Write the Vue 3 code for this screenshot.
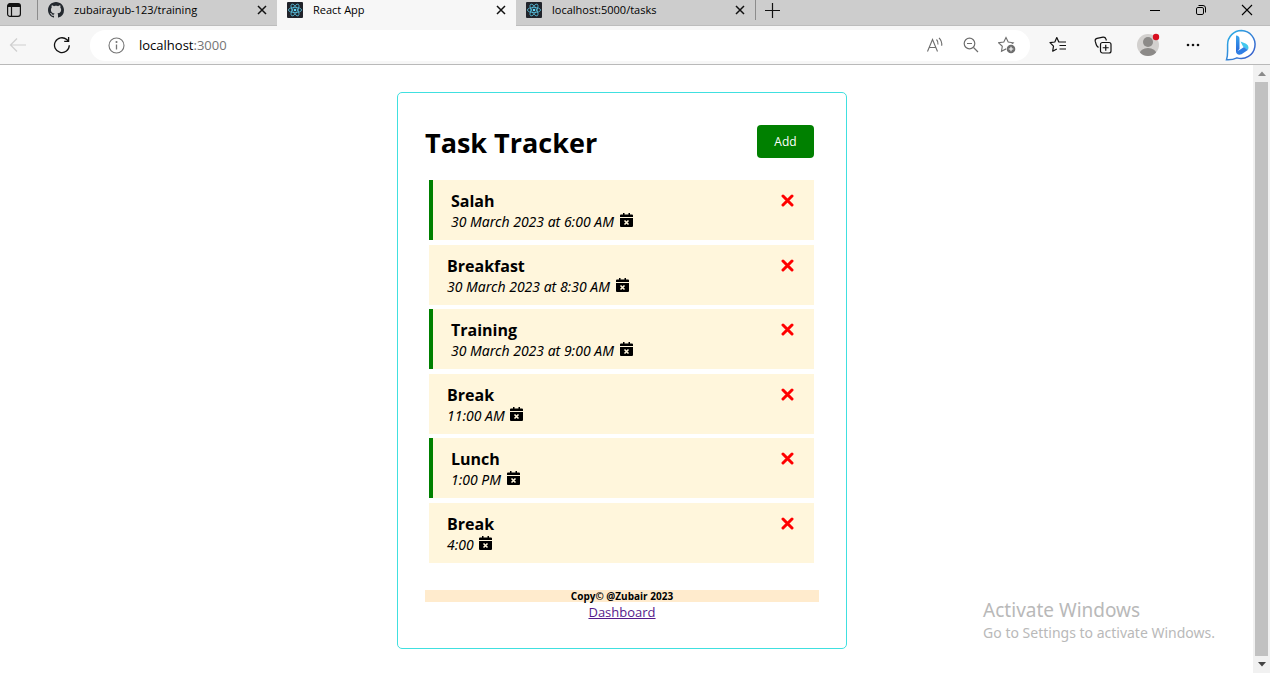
<script setup>
import { ref } from 'vue'

const tabs = [
  { title: 'zubairayub-123/training', icon: 'github', active: false },
  { title: 'React App', icon: 'react', active: true },
  { title: 'localhost:5000/tasks', icon: 'react', active: false },
]

const tasks = ref([
  { id: 1, text: 'Salah', day: '30 March 2023 at 6:00 AM', reminder: true },
  { id: 2, text: 'Breakfast', day: '30 March 2023 at 8:30 AM', reminder: false },
  { id: 3, text: 'Training', day: '30 March 2023 at 9:00 AM', reminder: true },
  { id: 4, text: 'Break', day: '11:00 AM', reminder: false },
  { id: 5, text: 'Lunch', day: '1:00 PM', reminder: true },
  { id: 6, text: 'Break', day: '4:00', reminder: false },
])

function removeTask(id) {
  tasks.value = tasks.value.filter((t) => t.id !== id)
}
</script>

<template>
  <div class="browser">
    <header class="tabbar">
      <button class="tab-actions" aria-label="Tab actions">
        <svg width="16" height="16" viewBox="0 0 16 16">
          <rect x="1.6" y="1.6" width="12.8" height="12.8" rx="2.4" fill="none" stroke="#111" stroke-width="1.2" />
          <path d="M1.6 5V4a2.4 2.4 0 0 1 2.4-2.4h8A2.4 2.4 0 0 1 14.4 4v1z" fill="#111" />
          <path d="M5.5 5v9" stroke="#111" stroke-width="1.2" />
        </svg>
      </button>
      <div v-for="tab in tabs" :key="tab.title" class="tab" :class="{ active: tab.active }">
        <svg v-if="tab.icon === 'github'" width="16" height="16" viewBox="0 0 16 16">
          <path fill="#24292f" d="M8 0C3.58 0 0 3.58 0 8c0 3.54 2.29 6.53 5.47 7.59.4.07.55-.17.55-.38 0-.19-.01-.82-.01-1.49-2.01.37-2.53-.49-2.69-.94-.09-.23-.48-.94-.82-1.13-.28-.15-.68-.52-.01-.53.63-.01 1.08.58 1.23.82.72 1.21 1.87.87 2.33.66.07-.52.28-.87.51-1.07-1.78-.2-3.64-.89-3.64-3.95 0-.87.31-1.59.82-2.15-.08-.2-.36-1.02.08-2.12 0 0 .67-.21 2.2.82.64-.18 1.32-.27 2-.27s1.36.09 2 .27c1.53-1.04 2.2-.82 2.2-.82.44 1.1.16 1.92.08 2.12.51.56.82 1.27.82 2.15 0 3.07-1.87 3.75-3.65 3.95.29.25.54.73.54 1.48 0 1.07-.01 1.93-.01 2.2 0 .21.15.46.55.38A8.01 8.01 0 0 0 16 8c0-4.42-3.58-8-8-8z" />
        </svg>
        <svg v-else width="16" height="16" viewBox="0 0 16 16">
          <rect width="16" height="16" rx="1" fill="#20232a" />
          <g fill="none" stroke="#61dafb" stroke-width="0.8" opacity="0.85">
            <ellipse cx="8" cy="8" rx="6.6" ry="2.6" />
            <ellipse cx="8" cy="8" rx="6.6" ry="2.6" transform="rotate(60 8 8)" />
            <ellipse cx="8" cy="8" rx="6.6" ry="2.6" transform="rotate(120 8 8)" />
          </g>
          <circle cx="8" cy="8" r="1.3" fill="#61dafb" />
        </svg>
        <span class="tab-title">{{ tab.title }}</span>
        <button class="tab-close" aria-label="Close tab">
          <svg width="10" height="10" viewBox="0 0 10 10"><path d="M1 1l8 8M9 1L1 9" stroke="#111" stroke-width="1.5" /></svg>
        </button>
      </div>
      <button class="new-tab" aria-label="New tab">
        <svg width="15" height="15" viewBox="0 0 15 15"><path d="M7.5 0v15M0 7.5h15" stroke="#111" stroke-width="1.2" /></svg>
      </button>
      <div class="window-controls">
        <button aria-label="Minimize">
          <svg width="10" height="10" viewBox="0 0 10 10"><path d="M0 5.5h10" stroke="#000" /></svg>
        </button>
        <button aria-label="Restore">
          <svg width="10" height="10" viewBox="0 0 10 10" fill="none" stroke="#000">
            <rect x="0.5" y="2.5" width="7" height="7" rx="1.4" />
            <path d="M2.5 .5H7A2.5 2.5 0 0 1 9.5 3v4.5" />
          </svg>
        </button>
        <button aria-label="Close">
          <svg width="12" height="12" viewBox="0 0 12 12"><path d="M1 1l10 10M11 1L1 11" stroke="#000" stroke-width="1.1" /></svg>
        </button>
      </div>
    </header>

    <div class="toolbar">
      <button class="nav back" aria-label="Back">
        <svg width="18" height="16" viewBox="0 0 18 16" fill="none" stroke="#cfcfcf" stroke-width="1.2"><path d="M17 8H1.5M8 1.5L1.5 8 8 14.5" /></svg>
      </button>
      <button class="nav" aria-label="Refresh">
        <svg width="18" height="18" viewBox="0 0 18 18" fill="none" stroke="#111" stroke-width="1.3"><path d="M16.3 9.2A7.4 7.4 0 1 1 13.8 3.6L15.3 5M15.6 1v4.400h-4.400" /></svg>
      </button>
      <div class="address">
        <svg width="17" height="17" viewBox="0 0 17 17" fill="none" stroke="#757575" stroke-width="1.1">
          <circle cx="8.5" cy="8.5" r="7.5" /><path d="M8.5 7.5v5" stroke-width="1.3" /><circle cx="8.5" cy="5" r="0.5" fill="#757575" />
        </svg>
        <span class="url">localhost<span class="port">:3000</span></span>
        <button aria-label="Read aloud">
          <svg width="18" height="18" viewBox="0 0 18 18" fill="none" stroke="#6e6e6e" stroke-width="1.1">
            <path d="M1.5 15.500L6.500 3.500l5 12M3.200 11.500h6.600M10.500 3.500q1.800 1.800 1.500 5M13 1.800q3.300 3.400 2.700 8" />
          </svg>
        </button>
        <button aria-label="Zoom out">
          <svg width="18" height="18" viewBox="0 0 18 18" fill="none" stroke="#6e6e6e" stroke-width="1.2">
            <circle cx="7.5" cy="7.5" r="5.3" /><path d="M5 7.500h5M11.500 11.500l4.500 4.500" />
          </svg>
        </button>
        <button aria-label="Add to favorites">
          <svg width="18" height="18" viewBox="0 0 18 18">
            <path d="M8 1.500l2.200 4.600 5 .7-3.600 3.500.8 5L8 12.900l-4.500 2.400.8-5L.700 6.800l5.100-.7z" fill="none" stroke="#6e6e6e" stroke-width="1.1" />
            <circle cx="13" cy="13" r="5" fill="#fff" /><circle cx="13" cy="13" r="4.3" fill="#6e6e6e" />
            <path d="M13 10.700v4.600M10.700 13h4.600" stroke="#fff" stroke-width="1.1" />
          </svg>
        </button>
      </div>
      <div class="tools">
        <button aria-label="Favorites">
          <svg width="18" height="18" viewBox="0 0 18 18" fill="none" stroke="#111" stroke-width="1.2" stroke-linejoin="round">
            <path d="M11 6H9.800L7.800 1.500 5.800 6 1 6.700l3.500 3.500-.8 5 4.100-2.200M10.500 6h6.500M10.500 9.500h6.500M10.500 13h6.500" />
          </svg>
        </button>
        <button aria-label="Collections">
          <svg width="18" height="18" viewBox="0 0 18 18" fill="none" stroke="#111" stroke-width="1.2">
            <path d="M4.500 11.500L3.200 10.300Q2.500 9.500 2.200 8.500L1.200 5.200Q.8 3 3 2.400L9 1.200Q11.300 .900 12 3.200L12.400 4.500" />
            <rect x="6.5" y="6.5" width="10.5" height="10.5" rx="2" />
            <path d="M11.750 8.700v6M8.700 11.750h6" />
          </svg>
        </button>
        <button aria-label="Profile">
          <svg width="24" height="24" viewBox="0 0 24 24">
            <defs><clipPath id="avatar"><circle cx="12" cy="12" r="11" /></clipPath></defs>
            <circle cx="12" cy="12" r="11" fill="#d2d0ce" />
            <g fill="#8c8a88" clip-path="url(#avatar)"><circle cx="12" cy="9" r="5" /><ellipse cx="12" cy="21" rx="8.5" ry="6" /></g>
            <circle cx="20" cy="4" r="3.2" fill="#d80f20" />
          </svg>
        </button>
        <button aria-label="Settings and more">
          <svg width="14" height="4" viewBox="0 0 14 4" fill="#111"><circle cx="2" cy="2" r="1.3" /><circle cx="7" cy="2" r="1.3" /><circle cx="12" cy="2" r="1.3" /></svg>
        </button>
        <button aria-label="Bing chat">
          <svg width="32" height="32" viewBox="0 0 32 32">
            <defs>
              <linearGradient id="ring" x1="0" y1="0" x2="1" y2="1"><stop offset="0" stop-color="#2bb5e8" /><stop offset="1" stop-color="#3a55c8" /></linearGradient>
              <linearGradient id="bing" x1="0" y1="0" x2="0" y2="1"><stop offset="0" stop-color="#3aa8ee" /><stop offset="1" stop-color="#2563d8" /></linearGradient>
            </defs>
            <path d="M16.500 1.500a14 14 0 1 1-4.500 27.400C9 30.300 5 31 1.500 30.800 2.500 28 2.600 26 2.600 22V15.500A14 14 0 0 1 16.500 1.500z" fill="#fff" stroke="url(#ring)" stroke-width="1.5" />
            <path d="M11 6.500q3.500.3 3.500 3.500V20L11 23.500z" fill="url(#bing)" />
            <path d="M15.500 12.500l5 2c2.600 1.200 3.800 3.700 2.300 6.500L18 17.600z" fill="#42c8ee" />
            <path d="M11 22.500l3.500-1.500 4.500-3 3.800 3-6.300 4.200c-2.800 1.200-5.500 0-5.500-2.700z" fill="#2f7fe5" />
          </svg>
        </button>
      </div>
    </div>

    <div class="viewport">
      <main class="page">
        <section class="container">
          <div class="heading">
            <h1>Task Tracker</h1>
            <button class="add">Add</button>
          </div>
          <div class="tasks">
            <article v-for="task in tasks" :key="task.id" class="task" :class="{ reminder: task.reminder }">
              <div>
                <h3>{{ task.text }}</h3>
                <p>
                  {{ task.day }}
                  <svg class="calendar" viewBox="0 0 13 14" width="13" height="14">
                    <path d="M3 0h1.500v1.500h4V0H10v1.500h2q1 0 1 1V4H0V2.500q0-1 1-1h2zM0 5h13v8q0 1-1 1H1q-1 0-1-1z" />
                    <path d="M4.500 7.500l4 4M8.500 7.500l-4 4" stroke="#fff6dc" stroke-width="1.6" />
                  </svg>
                </p>
              </div>
              <button class="remove" :aria-label="'Delete ' + task.text" @click="removeTask(task.id)">
                <svg width="13" height="13" viewBox="0 0 13 13"><path d="M2 2l9 9M11 2l-9 9" stroke="red" stroke-width="3" stroke-linecap="round" /></svg>
              </button>
            </article>
          </div>
          <footer>
            <h6>Copy© @Zubair 2023</h6>
            <a href="#dashboard">Dashboard</a>
          </footer>
        </section>
      </main>
      <div class="scrollbar" aria-hidden="true">
        <svg width="8" height="5" viewBox="0 0 8 5"><path d="M0 5l4-4.500L8 5z" fill="#8a8a8a" /></svg>
        <div class="thumb"></div>
        <svg width="8" height="5" viewBox="0 0 8 5"><path d="M0 0l4 4.500L8 0z" fill="#444" /></svg>
      </div>
      <aside class="watermark">
        <strong>Activate Windows</strong>
        <span>Go to Settings to activate Windows.</span>
      </aside>
    </div>
  </div>
</template>

<style>
body {
  margin: 0;
  background: #fff;
}
</style>

<style scoped>
.browser {
  display: flex;
  flex-direction: column;
  height: 100vh;
  overflow: hidden;
  font-family: "Open Sans", "Noto Sans", sans-serif;
  color: #000;
}
button {
  display: flex;
  align-items: center;
  justify-content: center;
  margin: 0;
  padding: 0;
  border: 0;
  background: none;
  font-family: inherit;
}
svg {
  flex: none;
}
h1, h3, h6, p {
  margin: 0;
}

.tabbar {
  display: flex;
  flex: none;
  height: 26px;
  background: #cdcdcd;
  box-sizing: border-box;
  border-bottom: 1px solid #bdbdbd;
}
.tab-actions {
  width: 38px;
  height: 20px;
  box-sizing: border-box;
  padding-right: 9px;
  border-right: 1px solid #8c8c8c;
}
.tab {
  display: flex;
  align-items: center;
  flex: 0 1 239px;
  height: 26px;
  box-sizing: border-box;
  padding: 0 8px 6px 10px;
  font-size: 11px;
  line-height: 16px;
}
.tab.active {
  background: #f7f7f7;
}
.tab-title {
  flex: 1;
  margin-left: 10px;
  white-space: nowrap;
}
.tab-close {
  width: 14px;
  height: 14px;
}
.new-tab {
  width: 34px;
  height: 20px;
  border-left: 1px solid #8c8c8c;
}
.window-controls {
  display: flex;
  height: 20px;
  margin-left: auto;
}
.window-controls button {
  width: 46px;
}

.toolbar {
  display: flex;
  align-items: center;
  flex: none;
  height: 39px;
  box-sizing: border-box;
  border-bottom: 1px solid #b9b9b9;
  background: #f7f7f7;
}
.nav {
  width: 44px;
  height: 30px;
}
.nav.back {
  width: 36px;
  margin-right: 4px;
}
.address {
  display: flex;
  align-items: center;
  flex: 1;
  height: 31px;
  margin-left: 6px;
  padding: 0 5px 0 18px;
  box-sizing: border-box;
  border-radius: 16px;
  background: #fff;
}
.url {
  flex: 1;
  margin-left: 14px;
  font-size: 13px;
  line-height: 18px;
}
.port {
  color: #757575;
}
.address button {
  width: 36px;
  height: 30px;
}
.tools {
  display: flex;
  align-items: center;
  padding: 0 3px 0 5px;
}
.tools button {
  width: 45px;
  height: 36px;
}
.tools button:last-child {
  width: 52px;
}

.viewport {
  position: relative;
  display: flex;
  flex: 1;
  min-height: 0;
}
.page {
  flex: 1;
  padding: 27px 9px 0 0;
}
.container {
  width: 450px;
  margin: 0 auto;
  box-sizing: border-box;
  padding: 27px 27px 26px;
  border: 1px solid #40e0e0;
  border-radius: 5px;
}
.heading {
  display: flex;
  align-items: flex-start;
  justify-content: space-between;
  padding: 5px 5px 20px 0;
}
h1 {
  font-size: 27px;
  line-height: 35px;
  font-weight: 700;
}
.add {
  width: 57px;
  height: 33px;
  border-radius: 4px;
  background: #008000;
  color: #fff;
  font-size: 12px;
}
.tasks {
  display: flex;
  flex-direction: column;
  justify-content: space-between;
  min-height: 383px;
  margin: 0 5px 27px 4px;
}
.task {
  display: flex;
  justify-content: space-between;
  align-items: flex-start;
  padding: 11px 20px 8px 18px;
  background: #fff6dc;
}
.task.reminder {
  border-left: 4px solid #008000;
}
h3 {
  font-size: 16px;
  line-height: 21px;
}
p {
  font-family: "Noto Sans", "Open Sans", sans-serif;
  font-size: 14px;
  line-height: 20px;
  font-style: italic;
}
.calendar {
  margin-left: 2px;
  vertical-align: 0;
}
.remove {
  width: 13px;
  height: 19px;
}
footer {
  text-align: center;
}
h6 {
  background: #ffebcd;
  font-size: 10px;
  line-height: 12px;
}
footer a {
  display: block;
  color: #551a8b;
  font-size: 13px;
  line-height: 20px;
}
.scrollbar {
  display: flex;
  flex-direction: column;
  align-items: center;
  gap: 6px;
  width: 17px;
  padding: 6px 0;
  box-sizing: border-box;
  background: #f1f1f1;
}
.thumb {
  flex: 1;
  width: 13px;
  background: #c1c1c1;
}
.watermark {
  position: absolute;
  right: 55px;
  bottom: 30px;
  display: flex;
  flex-direction: column;
  color: #b9b9b9;
  font-family: "Noto Sans", "Open Sans", sans-serif;
  font-size: 14px;
  line-height: 20px;
}
.watermark strong {
  font-size: 19px;
  line-height: 26px;
  font-weight: 400;
}
</style>
